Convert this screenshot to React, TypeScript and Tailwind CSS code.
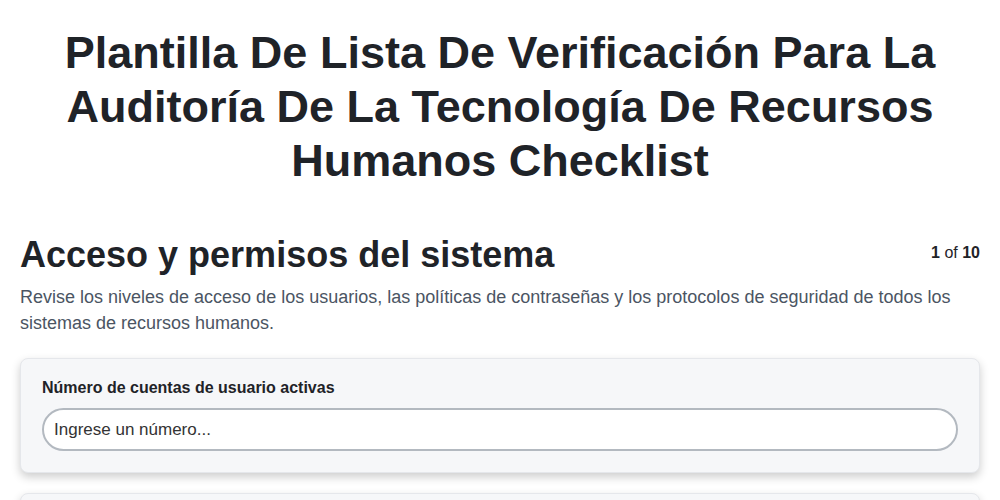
import React from 'react';

const App: React.FC = () => {
  return (
    <div className="min-h-screen bg-white text-[#1f2328]" style={{ fontFamily: '"Liberation Sans", Arial, sans-serif' }}>
      <div className="px-5 pt-[26px]">
        <h1 className="text-center text-[45px] font-bold leading-[54px] px-8">
          Plantilla De Lista De Verificación Para La Auditoría De La Tecnología De Recursos Humanos Checklist
        </h1>

        <div className="mt-[45px] flex items-start justify-between">
          <h2 className="text-[36px] font-bold leading-[44px]">Acceso y permisos del sistema</h2>
          <div className="pt-[8px] text-base">
            <span className="font-bold">1</span> of <span className="font-bold">10</span>
          </div>
        </div>

        <p className="mt-[7px] text-[18px] leading-[26px] text-[#4b5563]">
          Revise los niveles de acceso de los usuarios, las políticas de contraseñas y los protocolos de seguridad de todos los sistemas de recursos humanos.
        </p>

        <div className="mt-[22px] flex flex-col gap-[20px]">
          <div className="rounded-lg border border-[#e5e7eb] bg-[#f6f7f9] px-[21px] pt-[19px] pb-[21px] shadow-[0_4px_10px_rgba(0,0,0,0.2)]">
            <label className="block text-[16px] font-bold leading-5 text-[#1f2328]">
              Número de cuentas de usuario activas
            </label>
            <input
              type="text"
              placeholder="Ingrese un número..."
              className="mt-[10px] h-[43px] w-full rounded-[22px] border-2 border-[#b3b9c0] bg-white px-[10px] text-[17px] text-[#333] placeholder:text-[#333] outline-none"
            />
          </div>
          <div className="h-[115px] rounded-lg border border-[#e5e7eb] bg-[#f6f7f9] shadow-[0_4px_10px_rgba(0,0,0,0.2)]" />
        </div>
      </div>
    </div>
  );
};

export default App;
